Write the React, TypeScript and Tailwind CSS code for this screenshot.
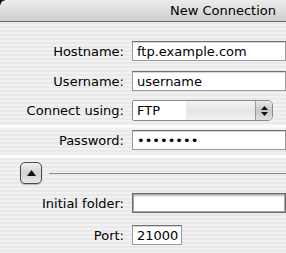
import React from "react";

const font = { fontFamily: '"DejaVu Sans", "Lucida Grande", sans-serif' };

function Label({ children }: { children: React.ReactNode }) {
  return (
    <div className="w-[125px] shrink-0 pr-[1px] text-right text-[13px] leading-none text-black">
      {children}
    </div>
  );
}

function Field({ value, w = "flex-1", focus = false }: { value: string; w?: string; focus?: boolean }) {
  return (
    <div
      className={`${w} h-[20px] bg-white border ${
        focus
          ? "border-[#6a6a6a] shadow-[inset_0_0_0_1px_#a8a8a8,inset_0_2px_2px_rgba(0,0,0,0.25)]"
          : "border-[#9a9a9a] border-t-[#6f6f6f] shadow-[inset_0_1px_0_#d8d8d8]"
      } flex items-center pl-[4px] text-[13px] leading-none text-black whitespace-nowrap overflow-hidden`}
    >
      {value}
    </div>
  );
}

export default function App() {
  return (
    <div
      className="w-[286px] h-[253px] overflow-hidden relative bg-[repeating-linear-gradient(to_bottom,#f1f1f1_0px,#f1f1f1_2px,#e9e9e9_2px,#e9e9e9_4px)]"
      style={font}
    >
      <div className="h-[22px] bg-gradient-to-b from-[#ececec] via-[#dedede] to-[#cdcdcd] border-b border-[#6b6b6b] flex items-center justify-end pr-[10px] rounded-tl-[5px]">
        <span className="text-[13px] leading-none text-black">New Connection</span>
      </div>
      <div className="absolute left-0 top-0 w-[5px] h-[5px] bg-[radial-gradient(circle_at_100%_100%,transparent_4px,#111_5px)]" />

      <div className="flex flex-col">
        <div className="mt-[19px] flex items-center gap-[7px]">
          <Label>Hostname:</Label>
          <Field value="ftp.example.com" />
        </div>
        <div className="mt-[10px] flex items-center gap-[7px]">
          <Label>Username:</Label>
          <Field value="username" />
        </div>
        <div className="mt-[9px] flex items-center gap-[7px]">
          <Label>Connect using:</Label>
          <div className="w-[141px] h-[21px] flex border border-[#8a8a8a] rounded-r-[5px] rounded-l-[2px] overflow-hidden text-[13px] leading-none">
            <div className="w-[53px] bg-white flex items-center pl-[4px]">FTP</div>
            <div className="flex-1 bg-gradient-to-b from-[#f4f4f4] via-[#e6e6e6] to-[#f2f2f2]" />
            <div className="w-[17px] border-l border-[#9a9a9a] bg-gradient-to-b from-[#e8e8e8] via-[#c8c8c8] to-[#dedede] flex flex-col items-center justify-center gap-[2px]">
              <svg width="7" height="4" viewBox="0 0 7 4"><path d="M3.5 0 L7 4 L0 4 Z" fill="#111" /></svg>
              <svg width="7" height="4" viewBox="0 0 7 4"><path d="M0 0 L7 0 L3.5 4 Z" fill="#111" /></svg>
            </div>
          </div>
        </div>
        <div className="mt-[4px] h-[3px] bg-white/80" />
        <div className="mt-[2px] flex items-center gap-[7px]">
          <Label>Password:</Label>
          <Field value="••••••••" />
        </div>
        <div className="mt-[5px] h-[3px] bg-white/80" />
        <div className="mt-[4px] flex items-center">
          <div className="ml-[20px] w-[22px] h-[22px] rounded-[5px] border border-[#4a4a4a] bg-gradient-to-b from-[#f0f0f0] via-[#d2d2d2] to-[#e6e6e6] shadow-[0_1px_1px_rgba(0,0,0,0.25)] flex items-center justify-center">
            <svg width="9" height="6" viewBox="0 0 9 6"><path d="M4.5 0 L9 6 L0 6 Z" fill="#111" /></svg>
          </div>
          <div className="ml-[7px] flex-1 h-[1px] bg-[#8a8a8a]" />
        </div>
        <div className="mt-[9px] flex items-center gap-[7px]">
          <Label>Initial folder:</Label>
          <Field value="" focus />
        </div>
        <div className="mt-[12px] flex items-center gap-[7px]">
          <Label>Port:</Label>
          <Field value="21000" w="w-[50px]" />
        </div>
      </div>
    </div>
  );
}
